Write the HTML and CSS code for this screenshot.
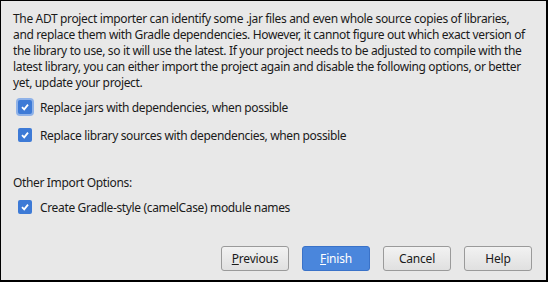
FILE: index.html
```html
<!DOCTYPE html>
<html lang="en">
  <head>
    <meta charset="UTF-8" />
    <title>Import Project</title>
    <link rel="stylesheet" href="styles.css">
  </head>
  <body>
    <div class="dialog">
      <p class="intro">
        The ADT project importer can identify some .jar files and even whole source copies of libraries,<br>
        and replace them with Gradle dependencies. However, it cannot figure out which exact version of<br>
        the library to use, so it will use the latest. If your project needs to be adjusted to compile with the<br>
        latest library, you can either import the project again and disable the following options, or better<br>
        yet, update your project.
      </p>

      <label class="check focused">
        <span class="box"><svg viewBox="0 0 10 10"><path d="M2 5.2 L4.2 7.4 L8 2.6" /></svg></span>
        Replace jars with dependencies, when possible
      </label>
      <label class="check">
        <span class="box"><svg viewBox="0 0 10 10"><path d="M2 5.2 L4.2 7.4 L8 2.6" /></svg></span>
        Replace library sources with dependencies, when possible
      </label>

      <div class="section">Other Import Options:</div>
      <label class="check">
        <span class="box"><svg viewBox="0 0 10 10"><path d="M2 5.2 L4.2 7.4 L8 2.6" /></svg></span>
        Create Gradle-style (camelCase) module names
      </label>

      <div class="buttons">
        <button class="btn"><u>P</u>revious</button>
        <button class="btn primary"><u>F</u>inish</button>
        <button class="btn">Cancel</button>
        <button class="btn">Help</button>
      </div>
    </div>
  </body>
</html>
```

FILE: styles.css
```css
* {
  margin: 0;
  padding: 0;
  box-sizing: border-box;
}

html, body {
  width: 548px;
  height: 282px;
  overflow: hidden;
}

body {
  font-family: "Noto Sans", "Open Sans", sans-serif;
  font-size: 12px;
  letter-spacing: -0.35px;
  color: #1a1a1a;
  background: #000;
}

.dialog {
  width: 548px;
  height: 282px;
  background: #e8e8e8;
  border-top: 1px solid #000;
  border-left: 1px solid #000;
  border-right: 2px solid #000;
  border-bottom: 2px solid #000;
  padding: 10px 12px 0 12px;
  display: flex;
  flex-direction: column;
}

.intro {
  line-height: 16px;
  margin-bottom: 8px;
  white-space: nowrap;
}

.check {
  display: flex;
  align-items: center;
  gap: 8px;
  height: 16px;
  margin-left: 5px;
  margin-bottom: 12px;
}

.box {
  width: 14px;
  height: 14px;
  border-radius: 2px;
  background: #3d7ad6;
  display: flex;
  align-items: center;
  justify-content: center;
}

.focused .box {
  box-shadow: 0 0 0 2px #8fb2e8;
}

.box svg {
  width: 10px;
  height: 10px;
  fill: none;
  stroke: #fff;
  stroke-width: 1.8;
}

.section {
  margin-top: 20px;
  margin-bottom: 8px;
  line-height: 16px;
}

.buttons {
  margin-top: auto;
  margin-bottom: 9px;
  display: flex;
  justify-content: flex-end;
  gap: 13px;
  padding-right: 2px;
}

.btn {
  width: 68px;
  height: 25px;
  font-family: inherit;
  font-size: 12px;
  letter-spacing: -0.2px;
  color: #1a1a1a;
  background: linear-gradient(#f2f2f2, #e0e0e0);
  border: 1px solid #9a9a9a;
  border-radius: 3px;
}

.btn.primary {
  background: #4a86dc;
  border-color: #3a72c8;
  color: #fff;
}

.btn u {
  text-decoration: underline;
}
```
